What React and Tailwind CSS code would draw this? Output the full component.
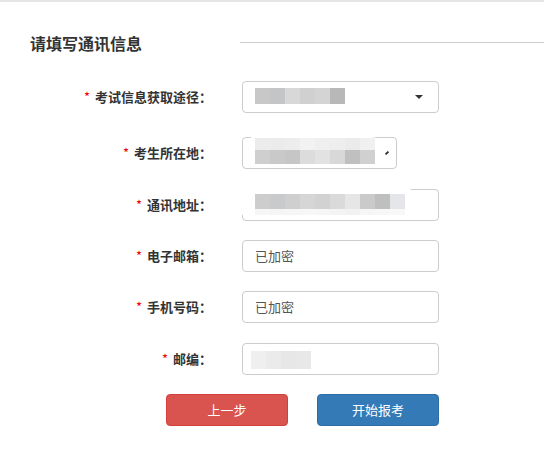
import React from 'react';

const FONT = {fontFamily: '"Noto Sans CJK SC", "Noto Sans", sans-serif'};

function Mosaic({rows, className}) {
    return <div className={'pointer-events-none absolute flex flex-col blur-[0.6px] ' + className}>
        {rows.map((row, i) => (
            <div key={i} className="flex">
                {row.colors.map((c, j) => (
                    <div key={j} className={row.h + ' w-[15px]'} style={{backgroundColor: c}}/>
                ))}
            </div>
        ))}
    </div>;
}

function Label({text}) {
    return <div className="w-[212px] flex-none text-right text-[13px] font-bold text-[#333]">
        <span className="mr-[5px] font-normal text-[#e00]">*</span>{text}：
    </div>;
}

function Field({label, width = 'w-[197px]', className = '', children}) {
    return <div className={'flex h-[32px] items-center ' + className}>
        <Label text={label}/>
        <div className={'relative ml-[30px] h-[32px] rounded-[4px] border border-[#ccc] bg-white ' + width}>
            {children}
        </div>
    </div>;
}

export default function App() {
    return <div className="h-[449px] w-[544px] overflow-hidden border-t-2 border-[#e6e6e6] bg-white" style={FONT}>
        <div className="mt-[29px] flex h-[24px] items-center">
            <div className="w-[240px] flex-none pl-[30px] text-[16px] font-bold text-[#333]">请填写通讯信息</div>
            <div className="mt-[-2px] h-px flex-1 bg-[#ccc]"/>
        </div>

        <div className="mt-[26px] flex flex-col">
            <Field label="考试信息获取途径">
                <Mosaic className="left-[8px] top-[4px] rounded-[8px] bg-white px-[4px] py-[2px]" rows={[
                    {h: 'h-[16px]', colors: ['#c8c8c8', '#c4c5c7', '#d8d8d8', '#d0d0d0', '#d4d4d4', '#b8b8b8']},
                ]}/>
                <div className="absolute right-[15px] top-[13px] h-0 w-0 border-x-[4px] border-t-[4px] border-x-transparent border-t-[#333]"/>
            </Field>
            <Field label="考生所在地" width="w-[155px]" className="mt-[24px]">
                <Mosaic className="left-[8px] top-[-1px] rounded-r-[14px] bg-white py-[1px] pl-[4px] pr-[10px]" rows={[
                    {h: 'h-[12px]', colors: ['#ececec', '#ebebeb', '#ededed', '#f2f2f2', '#efefef', '#eeeeee', '#ebebeb', '#f0f0f0']},
                    {h: 'h-[14px]', colors: ['#cfcfcf', '#c9c9c9', '#c6c6c6', '#dcdcdc', '#e2e2e2', '#d8d8d8', '#c0c0c0', '#d0d0d0']},
                ]}/>
                <div className="absolute right-[8px] top-[13px] h-[4px] w-[2px] rotate-45 bg-[#333]"/>
            </Field>
            <Field label="通讯地址" className="mt-[20px]">
                <Mosaic className="left-[-2px] top-[-2px] rounded-[6px] bg-white py-[2px] pl-[14px] pr-[8px]" rows={[
                    {h: 'h-[4px]', colors: ['#fff', '#fff', '#fff', '#fff', '#fff', '#fff', '#fff', '#fff', '#fff', '#fff']},
                    {h: 'h-[15px]', colors: ['#cdcdcd', '#c9cacc', '#cfcfcf', '#d6d6d6', '#d2d2d2', '#dadada', '#e6e6e6', '#cacaca', '#bfbfbf', '#e4e6e9']},
                    {h: 'h-[6px]', colors: ['#f6f6f6', '#f5f5f5', '#f6f6f6', '#f7f7f7', '#f6f6f6', '#f4f4f4', '#f2f2f2', '#f6f6f6', '#f7f7f7', '#f8f8f8']},
                ]}/>
            </Field>
            <Field label="电子邮箱" className="mt-[19px]">
                <div className="pl-[12px] text-[13px] leading-[30px] text-[#555]">已加密</div>
            </Field>
            <Field label="手机号码" className="mt-[19px]">
                <div className="pl-[12px] text-[13px] leading-[30px] text-[#555]">已加密</div>
            </Field>
            <Field label="邮编" className="mt-[20px]">
                <Mosaic className="left-[8px] top-[7px] rounded-[10px] bg-[#f3f3f3]" rows={[
                    {h: 'h-[18px]', colors: ['#efefef', '#ebebeb', '#e7e7e7', '#e8e8e8']},
                ]}/>
            </Field>
        </div>

        <div className="mt-[19px] flex gap-[29px] pl-[166px]">
            <button type="button" className="h-[32px] w-[122px] rounded-[4px] border border-[#d43f3a] bg-[#d9534f] text-[13px] text-white">上一步</button>
            <button type="button" className="h-[32px] w-[122px] rounded-[4px] border border-[#2e6da4] bg-[#337ab7] text-[13px] text-white">开始报考</button>
        </div>
    </div>;
}
